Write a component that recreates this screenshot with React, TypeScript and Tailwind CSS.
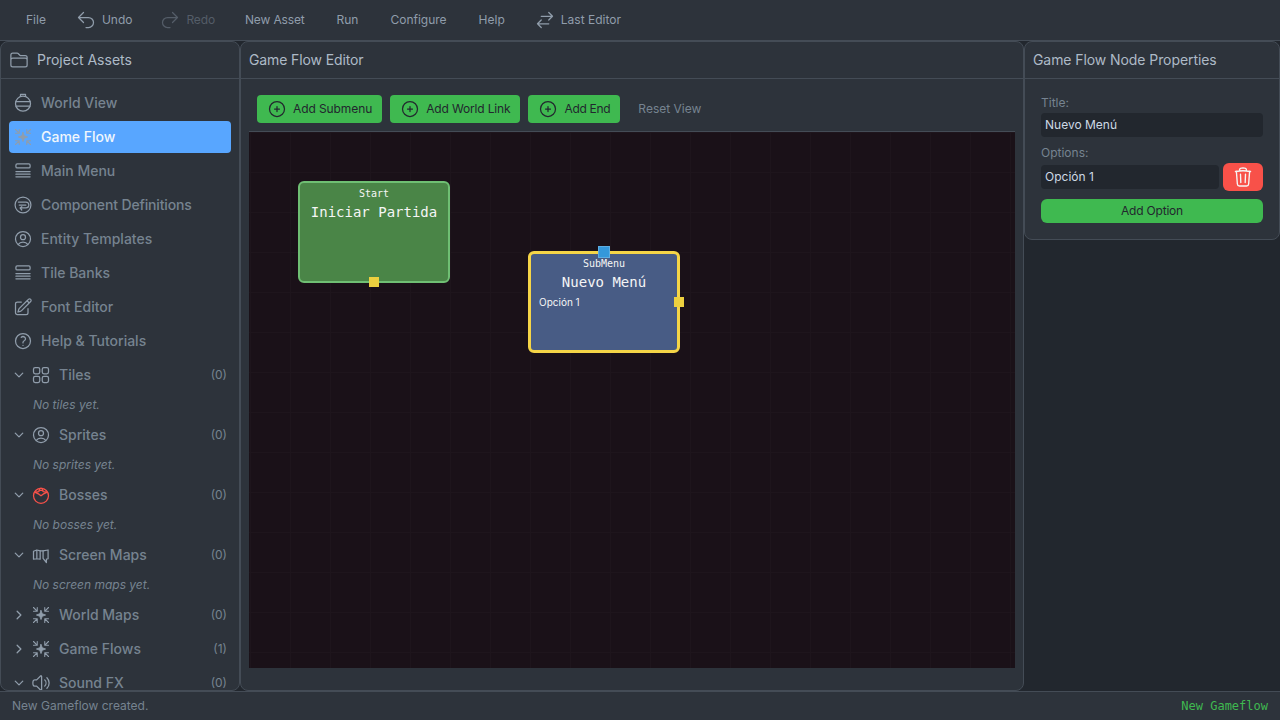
import React from "react";
import {
  HiOutlineArrowUturnLeft,
  HiOutlineArrowUturnRight,
  HiOutlineArrowsRightLeft,
  HiOutlineFolder,
  HiOutlineUserCircle,
  HiOutlinePencilSquare,
  HiOutlineQuestionMarkCircle,
  HiOutlinePlusCircle,
  HiOutlineTrash,
  HiOutlineChevronDown,
  HiOutlineChevronRight,
  HiOutlineSpeakerWave,
} from "react-icons/hi2";

type IconProps = { className?: string };

const Svg = ({ className, children }: IconProps & { children: React.ReactNode }) => (
  <svg viewBox="0 0 24 24" fill="none" stroke="currentColor" strokeWidth={1.5} strokeLinecap="round" strokeLinejoin="round" className={className}>
    {children}
  </svg>
);

const Globe = ({ className }: IconProps) => (
  <Svg className={className}>
    <circle cx="12" cy="12.8" r="9" />
    <path d="M3.6 10.400h16.800M3.600 15.600h16.800M9 3.900V1.500h6v2.400" />
  </Svg>
);
const Burst = ({ className }: IconProps) => (
  <Svg className={className}>
    <path d="M3 3l4 4M7.500 3v4.500H3M21 3l-4 4M16.500 3v4.500H21M3 21l4-4M7.500 21v-4.500H3M21 21l-4-4M16.500 21v-4.500H21" strokeWidth={1.3} />
    <path d="M12 6.500l1.500 4 4 1.500-4 1.500-1.500 4-1.500-4-4-1.500 4-1.500z" fill="currentColor" strokeWidth={1} />
  </Svg>
);
const Stack = ({ className }: IconProps) => (
  <Svg className={className}>
    <rect x="3.500" y="3.500" width="17" height="4.800" rx="1.500" />
    <path d="M3.500 12.700h17M3.500 15.800h17M3.500 18.900h17" />
  </Svg>
);
const Component = ({ className }: IconProps) => (
  <Svg className={className}>
    <circle cx="12" cy="12" r="9.500" />
    <path d="M6.500 8.500h9a3.500 3.500 0 0 1 0 7H8.500M7.500 12h8M10.500 18l-2-2.500 2-1.500" />
  </Svg>
);
const Squares = ({ className }: IconProps) => (
  <Svg className={className}>
    <rect x="3" y="3" width="7.500" height="7.500" rx="2" />
    <rect x="13.500" y="3" width="7.500" height="7.500" rx="2" />
    <rect x="3" y="13.500" width="7.500" height="7.500" rx="2" />
    <rect x="13.500" y="13.500" width="7.500" height="7.500" rx="2" />
  </Svg>
);
const Boss = ({ className }: IconProps) => (
  <Svg className={className}>
    <circle cx="12" cy="13" r="9" />
    <path d="M4.500 8.500l5 2.500L12 13l2.500-2 5-2.500-5-.5-1-4h-3l-1 4z" />
    <path d="M10 6.500h4" />
  </Svg>
);
const MapIcon = ({ className }: IconProps) => (
  <Svg className={className}>
    <path d="M3 7.500l4-1.500 4 1v10l-4-.5-4 .5zM7 6v10.500M14.500 7l6-1v10.500l-2 .5v4l-4-5z" />
    <path d="M11 7h3.500" />
  </Svg>
);

const Btn = ({ children, className = "" }: { children: React.ReactNode; className?: string }) => (
  <div className={`flex items-center gap-[6px] h-7 px-2.5 rounded text-xs ${className}`}>{children}</div>
);

const navItems: { label: string; Icon: React.ComponentType<IconProps>; active?: boolean; tight?: boolean }[] = [
  { label: "World View", Icon: Globe },
  { label: "Game Flow", Icon: Burst, active: true },
  { label: "Main Menu", Icon: Stack },
  { label: "Component Definitions", Icon: Component, tight: true },
  { label: "Entity Templates", Icon: HiOutlineUserCircle },
  { label: "Tile Banks", Icon: Stack },
  { label: "Font Editor", Icon: HiOutlinePencilSquare },
  { label: "Help & Tutorials", Icon: HiOutlineQuestionMarkCircle },
];

const sections: { label: string; Icon: React.ComponentType<IconProps>; count: number; empty?: string; open: boolean; red?: boolean }[] = [
  { label: "Tiles", Icon: Squares, count: 0, empty: "No tiles yet.", open: true },
  { label: "Sprites", Icon: HiOutlineUserCircle, count: 0, empty: "No sprites yet.", open: true },
  { label: "Bosses", Icon: Boss, count: 0, empty: "No bosses yet.", open: true, red: true },
  { label: "Screen Maps", Icon: MapIcon, count: 0, empty: "No screen maps yet.", open: true },
  { label: "World Maps", Icon: Burst, count: 0, open: false },
  { label: "Game Flows", Icon: Burst, count: 1, open: false },
  { label: "Sound FX", Icon: HiOutlineSpeakerWave, count: 0, open: true },
];

const PanelHeader = ({ children }: { children: React.ReactNode }) => (
  <div className="flex items-center gap-2 h-[37px] px-2 border-b border-[#444c56] text-sm text-[#adbac7] shrink-0">{children}</div>
);

export default function App() {
  return (
    <div className="flex flex-col w-[1280px] h-[720px] overflow-hidden bg-[#22272e] font-['Inter',sans-serif] text-[#adbac7]">
      <header className="flex items-center h-[41px] pl-[14px] gap-2 bg-[#2d333b] border-b border-[#444c56] text-xs text-[#909dab] shrink-0">
        <div className="px-3">File</div>
        <div className="flex items-center gap-[6px] px-2.5">
          <HiOutlineArrowUturnLeft className="w-5 h-5" />
          Undo
        </div>
        <div className="flex items-center gap-[6px] px-2.5 text-[#545d68] tracking-[-0.15px]">
          <HiOutlineArrowUturnRight className="w-5 h-5" />
          Redo
        </div>
        <div className="px-3 tracking-[-0.15px]">New Asset</div>
        <div className="px-3">Run</div>
        <div className="px-3">Configure</div>
        <div className="px-3">Help</div>
        <div className="flex items-center gap-[6px] px-2.5">
          <HiOutlineArrowsRightLeft className="w-5 h-5" />
          Last Editor
        </div>
      </header>

      <main className="flex flex-1 min-h-0 items-start">
        <aside className="flex flex-col w-[240px] h-full shrink-0 bg-[#2d333b] border border-[#444c56] rounded-lg overflow-hidden">
          <PanelHeader>
            <HiOutlineFolder className="w-5 h-5 text-[#909dab]" />
            <span>Project Assets</span>
          </PanelHeader>
          <div className="flex flex-col gap-[2px] px-2 pt-2 min-h-0">
            {navItems.map(({ label, Icon, active, tight }) => (
              <div
                key={label}
                className={`flex items-center gap-2 h-8 px-1 rounded text-sm font-medium shrink-0 ${active ? "bg-[#58a6ff] text-[#f0f6fc]" : "text-[#768390]"} ${tight ? "tracking-[-0.14px]" : ""}`}
              >
                <Icon className="w-5 h-5 shrink-0 text-[#909dab]" />
                {label}
              </div>
            ))}
            {sections.map(({ label, Icon, count, empty, open, red }) => (
              <div key={label} className="shrink-0">
                <div className={`flex items-center h-8 px-1 text-sm font-medium text-[#768390] ${open ? "mb-[2px]" : ""}`}>
                  {open ? (
                    <HiOutlineChevronDown strokeWidth={2.5} className="w-3 h-3 mr-[6px] shrink-0 text-[#909dab]" />
                  ) : (
                    <HiOutlineChevronRight strokeWidth={2.5} className="w-3 h-3 mr-[6px] shrink-0 text-[#909dab]" />
                  )}
                  <Icon className={`w-5 h-5 mr-2 shrink-0 ${red ? "text-[#f85149]" : "text-[#909dab]"}`} />
                  <span className="flex-1">{label}</span>
                  <span className="text-xs font-normal">({count})</span>
                </div>
                {empty && <div className="flex items-center h-6 pl-[24px] text-xs italic text-[#768390]">{empty}</div>}
              </div>
            ))}
          </div>
        </aside>

        <section className="flex flex-col flex-1 h-full min-w-0 bg-[#2d333b] border border-[#444c56] rounded-lg overflow-hidden">
          <PanelHeader>
            <span className="tracking-[-0.12px]">Game Flow Editor</span>
          </PanelHeader>
          <div className="flex flex-col flex-1 min-h-0 pt-4 pb-[22px] px-2">
            <div className="flex items-center gap-2 pl-2 pb-2 shrink-0">
              <Btn className="bg-[#3fb950] text-[#22272e] tracking-[-0.09px]">
                <HiOutlinePlusCircle className="w-5 h-5" />
                Add Submenu
              </Btn>
              <Btn className="bg-[#3fb950] text-[#22272e] tracking-[-0.16px]">
                <HiOutlinePlusCircle className="w-5 h-5" />
                Add World Link
              </Btn>
              <Btn className="bg-[#3fb950] text-[#22272e] tracking-[-0.3px]">
                <HiOutlinePlusCircle className="w-5 h-5" />
                Add End
              </Btn>
              <Btn className="text-[#768390]">Reset View</Btn>
            </div>
            <div className="relative flex-1 border-t border-[#444c56] bg-[#1a1118] bg-[linear-gradient(#1e151c_1px,transparent_1px),linear-gradient(90deg,#1e151c_1px,transparent_1px)] bg-[size:40px_40px] bg-[position:1px_0px] overflow-hidden">
              <div className="absolute left-[49px] top-[49px] w-[152px] h-[102px] rounded-md border-2 border-[#6fbf73] bg-[#4a8547] text-[#f5f5f5] text-center font-['DejaVu_Sans_Mono',monospace]">
                <div className="text-[10px] leading-3 mt-[5px]">Start</div>
                <div className="text-sm leading-5 mt-[2px]">Iniciar Partida</div>
              </div>
              <div className="absolute left-[120px] top-[145px] w-[10px] h-[10px] bg-[#ecd03f]" />

              <div className="absolute left-[279px] top-[119px] w-[152px] h-[102px] rounded-md border-[3px] border-[#f5d547] bg-[#485c85] text-[#f5f5f5] text-center font-['DejaVu_Sans_Mono',monospace]">
                <div className="text-[10px] leading-3 mt-[4px]">SubMenu</div>
                <div className="text-sm leading-5 mt-[2px]">Nuevo Menú</div>
                <div className="text-[10px] leading-3 mt-[4px] pl-2 text-left font-['Inter',sans-serif]">Opción 1</div>
              </div>
              <div className="absolute left-[349px] top-[114px] w-3 h-3 bg-[#3498db] border border-[#5dade2]" />
              <div className="absolute left-[425px] top-[165px] w-[10px] h-[10px] bg-[#ecd03f]" />
            </div>
          </div>
        </section>

        <aside className="flex flex-col w-[256px] shrink-0 bg-[#2d333b] border border-[#444c56] rounded-lg overflow-hidden">
          <PanelHeader>
            <span className="tracking-[-0.08px]">Game Flow Node Properties</span>
          </PanelHeader>
          <div className="flex flex-col px-4 pt-4 pb-4 text-xs">
            <label className="h-4 leading-4 text-[#768390]">Title:</label>
            <div className="flex items-center h-6 mt-[2px] px-1 rounded bg-[#22272e] text-[#cdd9e5]">Nuevo Menú</div>
            <label className="h-4 leading-4 mt-2 text-[#768390]">Options:</label>
            <div className="flex items-center gap-1 mt-[2px]">
              <div className="flex items-center flex-1 h-6 px-1 rounded bg-[#22272e] text-[#cdd9e5]">Opción 1</div>
              <div className="flex items-center justify-center w-10 h-7 rounded-md bg-[#f85149] text-[#f5f5f5]">
                <HiOutlineTrash className="w-[22px] h-[22px]" />
              </div>
            </div>
            <div className="flex items-center justify-center h-6 mt-2 rounded-md bg-[#3fb950] text-[#22272e] tracking-[-0.2px]">Add Option</div>
          </div>
        </aside>
      </main>

      <footer className="flex items-center justify-between h-[29px] px-3 bg-[#2d333b] border-t border-[#444c56] text-xs shrink-0">
        <span className="text-[#768390]">New Gameflow created.</span>
        <span className="text-[#3fb950] font-['DejaVu_Sans_Mono',monospace]">New Gameflow</span>
      </footer>
    </div>
  );
}
